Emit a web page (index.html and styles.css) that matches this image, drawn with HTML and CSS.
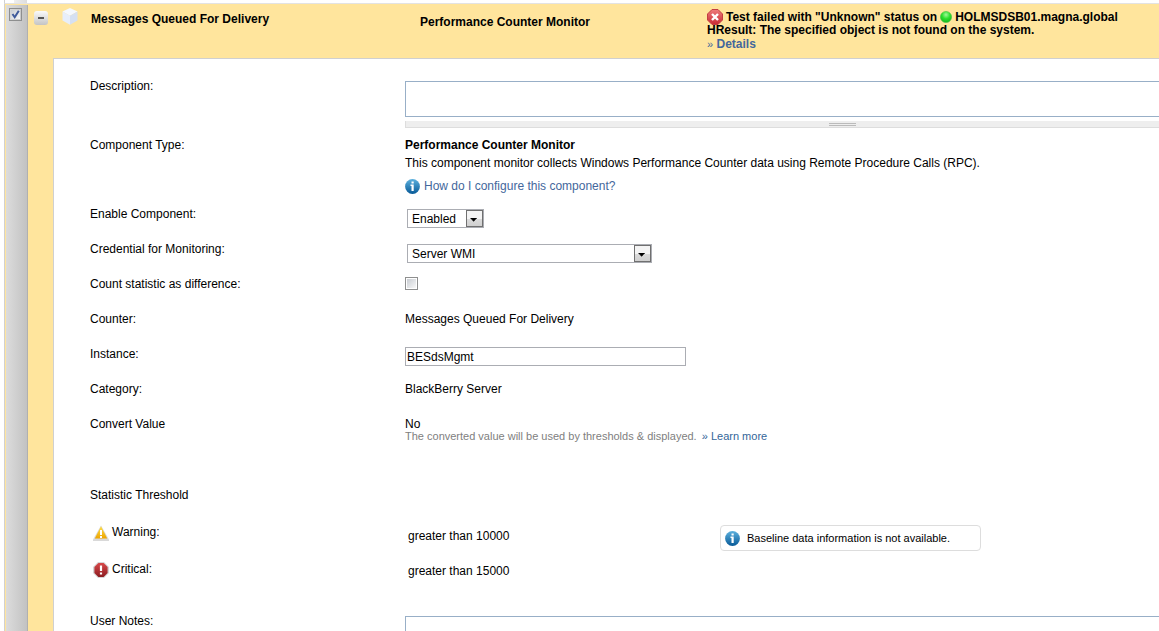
FILE: index.html
```
<!DOCTYPE html>
<html lang="en">
<head>
    <meta charset="UTF-8">
    <meta name="viewport" content="width=device-width, initial-scale=1.0">
    <title>Component Monitors</title>
    <link rel="stylesheet" href="styles.css">
</head>
<body>
    <!-- Shared icon shapes -->
    <svg class="defs" width="0" height="0" aria-hidden="true">
        <defs>
            <linearGradient id="blue" x1="0" y1="0" x2="0" y2="1">
                <stop offset="0" stop-color="#5cb0dd"/>
                <stop offset="1" stop-color="#085a98"/>
            </linearGradient>
            <linearGradient id="yellow" x1="0" y1="0" x2="0" y2="1">
                <stop offset="0" stop-color="#ffe04a"/>
                <stop offset="1" stop-color="#eda400"/>
            </linearGradient>
            <linearGradient id="red" x1="0" y1="0" x2="0" y2="1">
                <stop offset="0" stop-color="#d8484a"/>
                <stop offset="1" stop-color="#8c1c20"/>
            </linearGradient>
            <linearGradient id="rose" x1="0" y1="0" x2="0" y2="1">
                <stop offset="0" stop-color="#ee7b7b"/>
                <stop offset="1" stop-color="#c92a33"/>
            </linearGradient>
            <radialGradient id="green" cx="0.5" cy="0.3" r="0.7">
                <stop offset="0" stop-color="#a5f79a"/>
                <stop offset="0.5" stop-color="#2fe02f"/>
                <stop offset="1" stop-color="#12b51c"/>
            </radialGradient>
            <symbol id="info" viewBox="0 0 15 15">
                <circle cx="7.5" cy="7.5" r="7.4" fill="url(#blue)"/>
                <path d="M6.5 2.5h2.2v2H6.5zM5.5 5.5h3.2v6.5h-2.2V7h-1z" fill="#fff"/>
            </symbol>
            <symbol id="arrow" viewBox="0 0 17 17">
                <path d="M4 8h7v1h-1v1H9v1H8v1H7v-1H6v-1H5V9H4z" fill="#000"/>
            </symbol>
        </defs>
    </svg>

    <div class="previous-row"></div>
    <div class="monitor">
        <div class="select-column">
            <input type="checkbox" class="tick" aria-label="Select component" checked>
            <svg class="tick-mark" width="9" height="9" viewBox="0 0 9 9"><path d="M1.5 4L3.7 7.2L7.8 .8" fill="none" stroke="#3f5a9b" stroke-width="2"/></svg>
        </div>
        <div class="monitor-main">
            <header>
                <button type="button" class="collapse" aria-label="Collapse">
                    <svg width="14" height="14" viewBox="0 0 14 14"><path d="M4 6h6v2H4z" fill="#555"/></svg>
                </button>
                <svg class="cube" width="16" height="17" viewBox="0 0 16 17">
                    <path d="M8 0l7.5 3.6L8 7.8L.5 3.6z" fill="#f4f8fe"/>
                    <path d="M.5 3.6L8 7.8v9L.5 12.6z" fill="#e7eefa"/>
                    <path d="M15.5 3.6L8 7.8v9l7.5-4.2z" fill="#d5e0f2"/>
                </svg>
                <div class="monitor-name">Messages Queued For Delivery</div>
                <div class="monitor-type">Performance Counter Monitor</div>
                <div class="status">
                    <div class="status-line">
                        <svg width="16" height="16" viewBox="0 0 16 16">
                            <path d="M5 .5h6L15.5 5v6L11 15.5H5L.5 11V5z" fill="url(#rose)" stroke="#c33d42"/>
                            <path d="M5 5l6 6M11 5l-6 6" stroke="#fff" stroke-width="2.4"/>
                        </svg>
                        <span>Test failed with "Unknown" status on</span>
                        <svg class="led" width="12" height="12" viewBox="0 0 12 12"><circle cx="6" cy="6" r="5.6" fill="url(#green)" stroke="#49c247" stroke-width=".6"/></svg>
                        <span>HOLMSDSB01.magna.global</span>
                    </div>
                    <div>HResult: The specified object is not found on the system.</div>
                    <div><a href="#"><span class="raquo">&raquo;</span> Details</a></div>
                </div>
            </header>

            <form class="panel">
                <div class="row row-description">
                    <label for="description">Description:</label>
                    <div class="value">
                        <div class="resizable">
                            <textarea id="description"></textarea>
                            <div class="grippie"><span></span></div>
                        </div>
                    </div>
                </div>
                <div class="row row-type">
                    <div>Component Type:</div>
                    <div class="value">
                        <b>Performance Counter Monitor</b>
                        <p>This component monitor collects Windows Performance Counter data using Remote Procedure Calls (RPC).</p>
                        <a href="#" class="help"><svg width="15" height="15"><use href="#info"/></svg>How do I configure this component?</a>
                    </div>
                </div>
                <div class="row">
                    <label for="enabled">Enable Component:</label>
                    <div class="value">
                        <span class="dropdown dropdown-small">
                            <select id="enabled"><option>Enabled</option><option>Disabled</option></select>
                            <svg width="17" height="17"><use href="#arrow"/></svg>
                        </span>
                    </div>
                </div>
                <div class="row">
                    <label for="credential">Credential for Monitoring:</label>
                    <div class="value">
                        <span class="dropdown">
                            <select id="credential"><option>Server WMI</option></select>
                            <svg width="17" height="17"><use href="#arrow"/></svg>
                        </span>
                    </div>
                </div>
                <div class="row">
                    <label for="difference">Count statistic as difference:</label>
                    <div class="value"><input type="checkbox" id="difference" class="tick"></div>
                </div>
                <div class="row">
                    <div>Counter:</div>
                    <div class="value">Messages Queued For Delivery</div>
                </div>
                <div class="row">
                    <label for="instance">Instance:</label>
                    <div class="value"><input type="text" id="instance" value="BESdsMgmt"></div>
                </div>
                <div class="row">
                    <div>Category:</div>
                    <div class="value">BlackBerry Server</div>
                </div>
                <div class="row row-convert">
                    <div>Convert Value</div>
                    <div class="value">
                        No
                        <div class="hint">The converted value will be used by thresholds &amp; displayed. <a href="#">&raquo; Learn more</a></div>
                    </div>
                </div>
                <div class="row row-threshold">
                    <div>Statistic Threshold</div>
                </div>
                <div class="row row-threshold">
                    <div class="level">
                        <svg width="16" height="16" viewBox="0 0 16 16">
                            <path d="M8 .5L16 14.5V16H0v-1.5z" fill="#d9d9d9"/>
                            <path d="M8 1.2L14.2 13.6H1.8z" fill="url(#yellow)"/>
                            <path d="M7 5h2v5H7zM7 11h2v2H7z" fill="#fff"/>
                        </svg>
                        Warning:
                    </div>
                    <div class="value limit">greater than 10000</div>
                    <div class="baseline"><svg width="15" height="15"><use href="#info"/></svg>Baseline data information is not available.</div>
                </div>
                <div class="row row-critical">
                    <div class="level">
                        <svg width="16" height="16" viewBox="0 0 16 16">
                            <path d="M5 0h6l5 5v6l-5 5H5l-5-5V5z" fill="#d5d5d5"/>
                            <path d="M5.4 1h5.2L14.6 5v6l-4 4H5.4l-4-4V5z" fill="url(#red)"/>
                            <path d="M6.9 3.5h2.2v5.5H6.9zM6.9 10.5h2.2v2H6.9z" fill="#fff"/>
                        </svg>
                        Critical:
                    </div>
                    <div class="value limit">greater than 15000</div>
                </div>
                <div class="row row-description">
                    <label for="notes">User Notes:</label>
                    <div class="value">
                        <div class="resizable">
                            <textarea id="notes"></textarea>
                            <div class="grippie"><span></span></div>
                        </div>
                    </div>
                </div>
            </form>
        </div>
    </div>
</body>
</html>
```
FILE: styles.css
```
* {
    box-sizing: border-box;
}

html, body {
    height: 100%;
}

body {
    display: flex;
    flex-direction: column;
    margin: 0;
    overflow: hidden;
    background-color: #fff;
    color: #000;
    font-family: Arial, "Liberation Sans", sans-serif;
    font-size: 12px;
    line-height: 16px;
}

svg {
    display: block;
    flex: none;
}

.defs {
    position: absolute;
}

a {
    color: #336699;
    text-decoration: none;
}

p {
    margin: 0;
}

input, select, textarea {
    margin: 0;
    font: inherit;
    color: inherit;
}

/* Bottom edge of the row above */
.previous-row {
    flex: none;
    height: 4px;
    margin-left: 4px;
    border-left: 1px solid #d0d0d0;
    border-bottom: 1px solid #e3e3e3;
    background: linear-gradient(to right, #fff 9px, #eee 9px, #ddd 22px, #fff 22px);
}

.monitor {
    display: flex;
    flex: 1;
    min-height: 0;
    margin-left: 4px;
    overflow: hidden;
    border-left: 1px solid #d0d0d0;
    background-color: #ffe59d;
}

.select-column {
    position: relative;
    width: 23px;
    flex: none;
    margin-top: 1px;
    padding: 3px 0 0 3px;
    border-left: 1px solid #ffe59d;
    border-right: 1px solid #b0b0b0;
    background: linear-gradient(to right, #dcdcdc, #c2c2c2);
}

.tick {
    display: block;
    appearance: none;
    width: 13px;
    height: 13px;
    border: 1px solid #8e8f8f;
    background: linear-gradient(135deg, #c8ccd2, #f8f8f8) content-box #f4f4f4;
    padding: 1px;
}

.tick-mark {
    position: absolute;
    top: 5px;
    left: 5px;
    pointer-events: none;
}

.monitor-main {
    flex: 1;
    min-width: 0;
}

header {
    display: flex;
    height: 54px;
    font-weight: bold;
}

.collapse {
    width: 14px;
    height: 14px;
    margin: 7px 14px 0 6px;
    padding: 0;
    border: 0;
    border-radius: 3px;
    background: linear-gradient(#fafafa, #c4c4c4);
}

.cube {
    margin: 4px 13px 0 0;
}

.monitor-name {
    width: 329px;
    padding-top: 7px;
}

.monitor-type {
    width: 287px;
    padding-top: 10px;
}

.status {
    padding-top: 6px;
    line-height: 14px;
    white-space: nowrap;
}

.status-line {
    display: flex;
    align-items: center;
    gap: 3px;
    height: 13px;
}

.status a {
    color: #44679c;
}

.raquo {
    font-size: 11px;
    font-weight: normal;
}

.panel {
    padding: 19px 0 0 36px;
    margin-left: 25px;
    overflow: hidden;
    border-top: 1px solid #d0d0d0;
    border-left: 1px solid #d0d0d0;
    background-color: #fff;
}

.row {
    display: flex;
    min-height: 35px;
}

.row > :first-child {
    width: 315px;
    flex: none;
}

.value {
    flex: 1;
    min-width: 0;
}

.row-description {
    min-height: 59px;
}

.row-type {
    min-height: 69px;
}

.row-convert {
    min-height: 71px;
}

.row-threshold {
    min-height: 37px;
}

.row-critical {
    min-height: 52px;
}

/* The text areas run on past the right edge */
.resizable {
    width: 116%;
    padding-top: 3px;
}

.resizable textarea {
    display: block;
    width: 100%;
    height: 36px;
    border: 1px solid #98afc7;
    resize: none;
}

.grippie {
    height: 7px;
    margin-top: 4px;
    padding-top: 2px;
    border-left: 1px solid #ddd;
    border-bottom: 1px solid #ddd;
    background-color: #eee;
}

.grippie span {
    display: block;
    width: 27px;
    height: 3px;
    margin: 0 auto;
    border-top: 1px solid #bbb;
    border-bottom: 1px solid #bbb;
}

.row-type p {
    margin-top: 2px;
}

.help {
    display: flex;
    align-items: center;
    gap: 4px;
    margin-top: 7px;
    color: #44679c;
}

.dropdown {
    position: relative;
    display: block;
    width: 245px;
    height: 19px;
    margin: 3px 0 0 2px;
}

.dropdown-small {
    width: 77px;
}

.dropdown select {
    display: block;
    appearance: none;
    width: 100%;
    height: 100%;
    padding: 0 18px 0 4px;
    border: 1px solid #abadb3;
    border-radius: 0;
    background-color: #fff;
}

.dropdown svg {
    position: absolute;
    top: 1px;
    right: 1px;
    border: 1px solid #707070;
    background: linear-gradient(#f4f4f4 50%, #dcdcdc 50%, #d0d0d0);
    pointer-events: none;
}

.value .tick {
    margin-top: 1px;
}

input[type="text"] {
    display: block;
    width: 281px;
    height: 19px;
    margin-top: 1px;
    padding: 0 1px;
    border: 1px solid #abadb3;
}

.hint {
    margin-top: -4px;
    color: #808080;
    font-size: 11px;
}

.hint a {
    margin-left: 2px;
}

.level {
    display: flex;
    gap: 3px;
    padding-left: 3px;
}

.level svg {
    margin-top: 1px;
}

.limit {
    flex: none;
    width: 315px;
    padding: 4px 0 0 3px;
}

.row-critical .limit {
    padding-top: 2px;
}

.baseline {
    display: flex;
    align-items: center;
    gap: 7px;
    width: 261px;
    height: 26px;
    margin-top: 1px;
    padding-left: 4px;
    border: 1px solid #ddd;
    border-radius: 4px;
    font-size: 11px;
}
```
